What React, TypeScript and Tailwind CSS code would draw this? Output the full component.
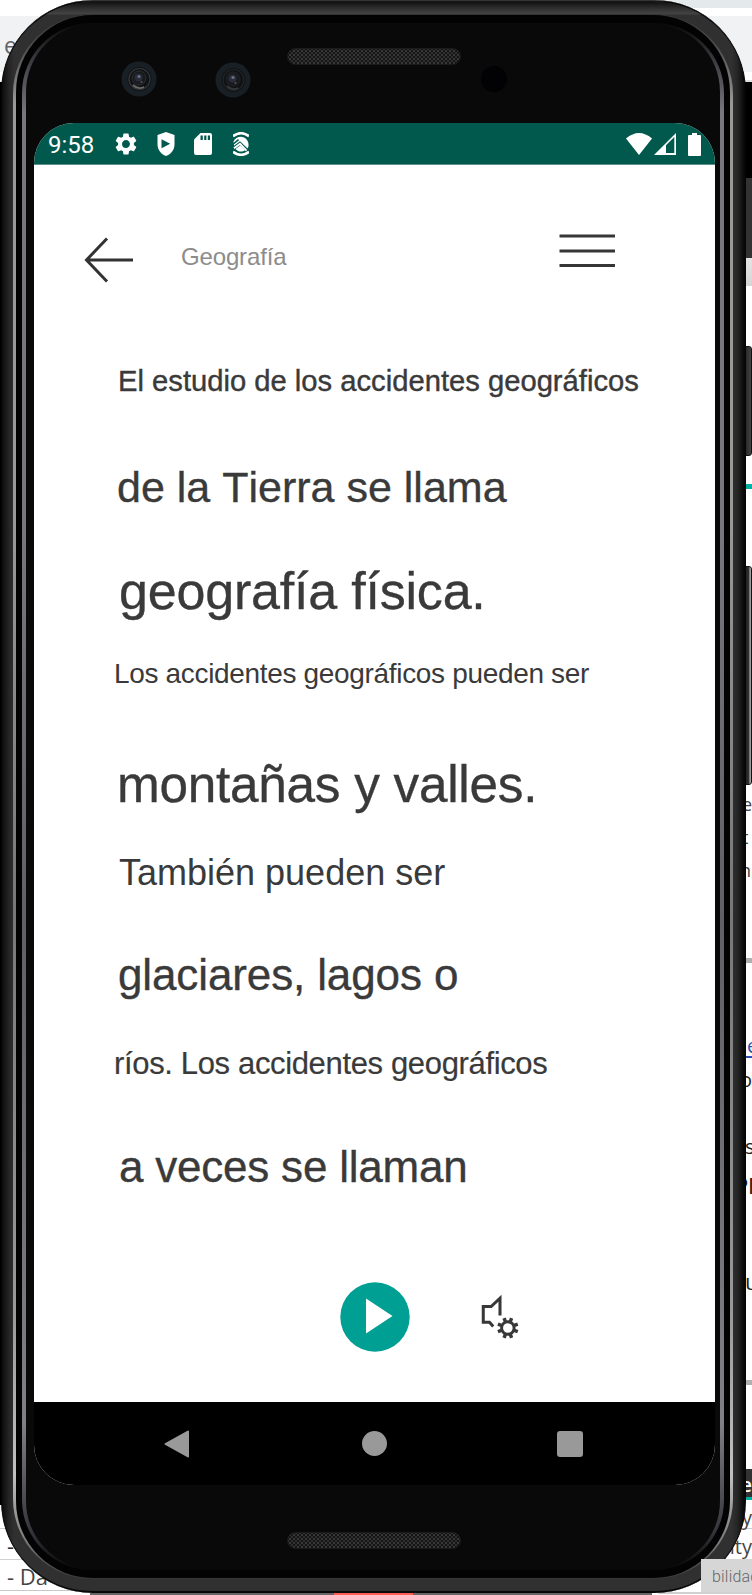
import React from "react";

const lines = [
  { text: "El estudio de los accidentes geográficos", cls: "ml-[84px] text-[29.2px] [-webkit-text-stroke:0.4px_#3a3a3a]" },
  { text: "de la Tierra se llama", cls: "mt-[46px] ml-[83px] text-[43px] [font-kerning:none] [-webkit-text-stroke:0.35px_#3a3a3a]" },
  { text: "geografía física.", cls: "mt-[44px] ml-[85px] text-[52px] tracking-[-0.2px] [-webkit-text-stroke:0.35px_#3a3a3a]" },
  { text: "Los accidentes geográficos pueden ser", cls: "mt-[23px] ml-[80px] text-[28px] tracking-[-0.33px]" },
  { text: "montañas y valles.", cls: "mt-[51px] ml-[83px] text-[51.3px] tracking-[-0.26px] [-webkit-text-stroke:0.35px_#3a3a3a]" },
  { text: "También pueden ser", cls: "mt-[28px] ml-[85px] text-[36px]" },
  { text: "glaciares, lagos o", cls: "mt-[42px] ml-[84px] text-[44px] tracking-[-0.12px] [-webkit-text-stroke:0.35px_#3a3a3a]" },
  { text: "ríos. Los accidentes geográficos", cls: "mt-[29px] ml-[80px] text-[31px] tracking-[-0.35px] [-webkit-text-stroke:0.2px_#3a3a3a]" },
  { text: "a veces se llaman", cls: "mt-[43px] ml-[85px] text-[44px] tracking-[-0.22px] [-webkit-text-stroke:0.35px_#3a3a3a]" },
];

function Backdrop() {
  const peek = "flex items-end justify-end whitespace-nowrap leading-none";
  return (
    <div className="flex h-full w-full justify-between overflow-hidden bg-white font-['Open_Sans','Noto_Sans',sans-serif]">
      <div className="flex w-[200px] flex-col">
        <div className="h-[16px]" />
        <div className="h-[56px] bg-[#f1f2f4] pt-[15px] pl-[4px] text-[23px] leading-[28px] text-[#5f6368]">e</div>
        <div className="h-[10px]" />
        <div className="h-[1423px] w-[3px] bg-black" />
        <div className="h-[23px]" />
        <div className="h-[31px] border-t border-[#d0d0d0] pl-[7px] text-[22px] leading-[33px] text-[#333]">-</div>
        <div className="h-[31px] border-t border-[#d0d0d0] pl-[7px] text-[22px] leading-[33px] text-[#444]">- Da</div>
        <div className="grow border-t border-[#c8c8c8]" />
      </div>
      <div className="flex w-[94px] flex-col overflow-hidden text-[20px] text-[#222]">
        <div className="h-[8px] bg-[#e4e9ec]" />
        <div className="h-[8px]" />
        <div className="h-[56px] bg-[#f1f2f4]" />
        <div className="h-[8px]" />
        <div className="h-[2px] bg-[#dfe0e4]" />
        <div className="h-[96px] bg-black" />
        <div className="h-[80px] bg-[#333]" />
        <div className="h-[28px] bg-linear-to-b from-[#e4e4e4] to-[#d5d5d5]" />
        <div className="h-[198px]" />
        <div className="h-[5px] bg-[#00b0a2]" />
        <div className="h-[469px]" />
        <div className="h-[5px] bg-[#b0b0b0]" />
        <div className="h-[417px]" />
        <div className="h-[5px] bg-[#b0b0b0]" />
        <div className="h-[84px]" />
        <div className={peek + " h-[28px] bg-[#333] text-[20px] font-semibold text-white"}>
          <span className="leading-[25px]">e</span>
        </div>
        <div className="h-[3px] bg-[#00b0a2]" />
        <div className="h-[29px] border-b border-[#ccc] text-right leading-[35px] text-[#444]">y</div>
        <div className="h-[31px] text-right leading-[36px] text-[#444]">ity</div>
        <div className="h-[32px]" />
        <div className="h-[2px] bg-[#d0d0d0]" />
      </div>
    </div>
  );
}

const peeks = [
  { t: "e", c: "top-[790px] left-[742px] text-[18px] text-[#444]" },
  { t: "t", c: "top-[823px] left-[742px] text-[18px] text-[#444]" },
  { t: "n", c: "top-[856px] left-[740px] text-[18px] text-[#444]" },
  { t: "e", c: "top-[1032px] left-[747px] text-[20px] text-[#2f4fb5]" },
  { t: "o", c: "top-[1066px] left-[740px] text-[20px] text-[#222]" },
  { t: "s", c: "top-[1133px] left-[745px] text-[20px] text-[#222]" },
  { t: "Pl", c: "top-[1171px] left-[735px] text-[22px] text-[#111]" },
  { t: "u", c: "top-[1267px] left-[745px] text-[22px] text-[#222]" },
];

function Camera({ second }: { second?: boolean }) {
  return (
    <svg width="36" height="36" viewBox="0 0 36 36">
      <circle cx="18" cy="18" r="17.5" fill="#182026" />
      <circle cx="18.5" cy="18" r="12" fill="#101214" />
      <circle cx="18.5" cy="18" r="10.5" fill="none" stroke={second ? "#222528" : "#36393c"} strokeWidth="1.2" />
      <circle cx="18" cy="17" r="7" fill="#171a1f" stroke={second ? "#1f2225" : "#2b2f32"} />
      <circle cx="17.500" cy="16.500" r="4" fill="#292d38" />
      <circle cx="18" cy="15.500" r="1.600" fill="#687087" />
      <path d="M12 24q5 5 11 2" stroke={second ? "#35373a" : "#686868"} fill="none" strokeWidth="1.800" />
      <circle cx="20.500" cy="21" r="1" fill="#555" />
    </svg>
  );
}

function Grille() {
  return (
    <div className="h-[17px] w-[174px] rounded-full border border-[#1b1b1b] bg-[#151515] bg-[radial-gradient(circle,#393939_0.7px,transparent_1.1px),radial-gradient(circle,#303030_0.7px,transparent_1.1px)] bg-[length:4px_4px] bg-[position:0_0,2px_2px]" />
  );
}

function StatusBar() {
  return (
    <div className="flex h-[41px] items-center bg-[#00594c] pt-px pl-[14px]">
      <span className="w-[66px] pt-px font-['Roboto',sans-serif] text-[24px] leading-[28px] text-white">9:58</span>
      <svg className="ml-px" width="22" height="24" viewBox="2 1.5 20 21" fill="#fff">
        <path d="M19.14 12.94c.04-.3.06-.61.06-.94 0-.32-.02-.64-.07-.94l2.03-1.58a.49.49 0 0 0 .12-.61l-1.92-3.32a.488.488 0 0 0-.59-.22l-2.39.96c-.5-.38-1.03-.7-1.62-.94l-.36-2.54a.484.484 0 0 0-.48-.41h-3.84c-.24 0-.43.17-.47.41l-.36 2.54c-.59.24-1.13.57-1.62.94l-2.39-.96c-.22-.08-.47 0-.59.22L2.74 8.87c-.12.21-.08.47.12.61l2.03 1.58c-.05.3-.09.63-.09.94s.02.64.07.94l-2.03 1.58a.49.49 0 0 0-.12.61l1.92 3.32c.12.22.37.29.59.22l2.39-.96c.5.38 1.03.7 1.62.94l.36 2.54c.05.24.24.41.48.41h3.84c.24 0 .44-.17.47-.41l.36-2.54c.59-.24 1.13-.56 1.62-.94l2.39.96c.22.08.47 0 .59-.22l1.92-3.32c.12-.22.07-.47-.12-.61l-2.01-1.58zM12 15.6A3.61 3.61 0 0 1 8.400 12c0-1.980 1.620-3.600 3.600-3.600s3.600 1.620 3.600 3.600-1.620 3.600-3.600 3.600z" />
      </svg>
      <svg className="ml-[20px]" width="18" height="24" viewBox="0 0 18 24">
        <path d="M9 0 0.500 3v9c0 6 3.500 10 8.500 12 5-2 8.500-6 8.500-12V3z" fill="#fff" />
        <path d="M4.500 7.200v9L13.200 11.700z" fill="#00594c" />
      </svg>
      <svg className="ml-[19px]" width="18" height="22" viewBox="0 0 18 22">
        <path d="M6.500 0H16a2 2 0 0 1 2 2v18a2 2 0 0 1-2 2H2a2 2 0 0 1-2-2V6.500z" fill="#fff" />
        <path d="M6.500 2.500h2.300V7H6.500zM10.200 2.500h2.200V7h-2.200zM13.800 2.500H16V7h-2.200z" fill="#00594c" />
      </svg>
      <svg className="ml-[21px]" width="16" height="24" viewBox="0 0 16 24" fill="none">
        <path d="M0 4.200Q8-1.800 16 4.200M0 19.800Q8 25.800 16 19.800" stroke="#fff" strokeWidth="2.600" />
        <path d="M0.500 9.500C3 3.800 10.500 3.200 14 8 16.200 11.500 15.800 14.500 14.600 16.500L7 9.200 1 13.800" fill="#fff" />
        <path d="M1 16.200 7 11.800 13.500 18.600" stroke="#fff" strokeWidth="2" />
        <path d="M2.500 17C5 20 9.500 20.200 12 18.300L7.200 13.500z" fill="#fff" />
        <path d="M0 12.300 5.500 7.600" stroke="#00594c" strokeWidth="1.500" />
      </svg>
      <svg className="ml-auto" width="26" height="22" viewBox="0 0 26 22">
        <path d="M0 5.500Q13-5.500 26 5.500L13 22z" fill="#fff" />
      </svg>
      <svg className="ml-[2px]" width="22" height="22" viewBox="0 0 22 22">
        <path d="M22 0v22H0z" fill="#fff" />
        <path d="M20.300 4v16H12v-7.800z" fill="#00594c" />
      </svg>
      <svg className="mr-[14px] ml-[12px]" width="13" height="23" viewBox="0 0 13 23">
        <path d="M4 0h5v2h3q1 0 1 1v19q0 1-1 1H1q-1 0-1-1V3q0-1 1-1h3z" fill="#fff" />
      </svg>
    </div>
  );
}

function AudioSettingsIcon() {
  return (
    <svg width="40" height="46" viewBox="0 0 38 44" fill="none" stroke="#383838">
      <path d="M19 20.500V4L10.500 12H3v15h6l3.500 4" strokeWidth="2.900" />
      <circle cx="26.500" cy="32.500" r="6" strokeWidth="2.800" />
      <g strokeWidth="3.300">
        <path d="M24.100 26.300 22.900 23M28.900 26.300 30.100 23M24.100 38.700 22.900 42M28.900 38.700 30.100 42M20.300 30.100 17 28.900M20.300 34.900 17 36.100M32.700 30.100 36 28.900M32.700 34.900 36 36.100" />
      </g>
    </svg>
  );
}

function Screen() {
  return (
    <div className="flex h-[1362px] w-[681px] flex-col overflow-hidden rounded-[40px] bg-white font-['Liberation_Sans',Arial,sans-serif]">
      <StatusBar />
      <main className="flex h-[1238px] flex-col border-t border-[#5d8f87]">
        <header className="flex h-[186px] items-start pt-[69px] pl-[50px]">
          <svg className="mt-[3px]" width="49" height="46" viewBox="0 0 49 46" fill="none" stroke="#333" strokeWidth="3">
            <path d="M2 23H49M23 1.500 2.500 23 23 44.500" />
          </svg>
          <h1 className="mt-px ml-[48px] w-[160px] text-[24px] leading-[44px] tracking-[-0.15px] text-[#8c8c8c]">Geografía</h1>
          <svg className="ml-[218px]" width="57" height="34" viewBox="0 0 57 34" stroke="#363636" strokeWidth="3">
            <path d="M0.500 2H56M0.500 17H56M0.500 31.500H56" />
          </svg>
        </header>
        <div className="flex flex-col text-[#3a3a3a]">
          {lines.map((l) => (
            <p key={l.text} className={"leading-[60px] whitespace-nowrap " + l.cls}>
              {l.text}
            </p>
          ))}
        </div>
        <div className="mt-[85px] flex items-center pl-[306px]">
          <svg width="70" height="70" viewBox="0 0 70 70">
            <circle cx="35" cy="35" r="34.700" fill="#009f93" />
            <path d="M26 16.500V51.500L52.500 34z" fill="#fff" />
          </svg>
          <div className="ml-[70px]">
            <AudioSettingsIcon />
          </div>
        </div>
      </main>
      <nav className="flex h-[83px] items-center bg-black pl-[130px]">
        <svg width="26" height="28" viewBox="0 0 26 28">
          <path d="M24 1.500v25L1.500 14z" fill="#999" stroke="#999" strokeWidth="2" strokeLinejoin="round" />
        </svg>
        <div className="ml-[172px] size-[25px] rounded-full bg-[#999]" />
        <div className="ml-[170px] size-[26px] rounded-[3px] bg-[#999]" />
      </nav>
    </div>
  );
}

function Phone() {
  return (
    <div className="h-[1593px] w-[745px] rounded-[92px] border-x border-[#050505] bg-linear-to-b from-[#444] via-[#080808] via-[2px] to-[#080808] pt-[2px] pb-[2px]">
      <div className="h-full rounded-[90px] bg-[linear-gradient(to_right,#0c0c0c_0px,#161616_3px,#252525_7px,#303030_12px,#303030_730px,#262626_735px,#171717_739px,#080808_742px)] pb-[12px]">
        <div className="h-full rounded-[90px] bg-[linear-gradient(to_bottom,#111_0px,#242424_4px,#363636_8px,#444_12px,transparent_13px)] pt-[12px] pr-[12px] pl-[11px]">
          <div className="h-full rounded-[80px] bg-[linear-gradient(to_bottom,#333_0px,#555_40px,#999_90px,#999_500px,#777_900px,#999_1300px,#c0c0c0_1460px,#777_1530px,#333_1567px)] px-[3px] py-px">
            <div className="h-full rounded-[77px] bg-[#030303] px-[6px] pt-[8px] pb-[8px]">
              <div className="h-full rounded-[70px] bg-[linear-gradient(to_bottom,#090909_0px,#44444b_45px,#77777f_90px,#77777f_500px,#606066_900px,#808087_1400px,#33333a_1510px,#090909_1545px)] px-[4px] pt-px pb-px">
                <div className="flex h-full flex-col rounded-[68px] bg-[#090909] pr-[5px] pl-[8px]">
                  <div className="flex h-[99px] items-start">
                    <div className="mt-[37px] ml-[87px]"><Camera /></div>
                    <div className="mt-[38px] ml-[58px]"><Camera second /></div>
                    <div className="mt-[24px] ml-[36px]"><Grille /></div>
                    <div className="mt-[42px] ml-[20px] size-[26px] rounded-full bg-[#020204]" />
                  </div>
                  <Screen />
                  <div className="flex pt-[47px] pl-[253px]"><Grille /></div>
                </div>
              </div>
            </div>
          </div>
        </div>
      </div>
    </div>
  );
}

export default function App() {
  return (
    <div className="relative h-[1595px] w-[752px] overflow-hidden bg-white">
      <Backdrop />
      {peeks.map((p, i) => (
        <span key={i} className={"absolute leading-[28px] font-['Open_Sans','Noto_Sans',sans-serif] " + p.c}>{p.t}</span>
      ))}
      <div className="absolute top-[1056px] left-[740px] h-[2px] w-[12px] bg-[#2f4fb5]" />
      <div className="absolute top-[346px] left-[740px] h-[110px] w-[12px] rounded-[3px] border border-[#111] bg-linear-to-r from-[#111] to-[#444]" />
      <div className="absolute top-[566px] left-[740px] h-[219px] w-[12px] rounded-[3px] border border-[#111] bg-[linear-gradient(to_right,#222_5px,#333_8px,#bbb_9px,#444_11px)]" />
      <div className="absolute top-[1593px] left-[90px] h-[2px] w-[562px] bg-[#666]" />
      <div className="absolute top-[1593px] left-[334px] h-[2px] w-[79px] bg-[#ff5a5a]" />
      <div className="absolute top-0 left-px"><Phone /></div>
      <div className="absolute top-[1559px] left-[701px] flex h-[33px] w-[51px] items-center overflow-hidden bg-[#d6d6d6] pt-[3px] pl-[11px] font-['Roboto',sans-serif] text-[16px] font-light tracking-[0.2px] whitespace-nowrap text-[#666]">
        bilidad
      </div>
    </div>
  );
}
